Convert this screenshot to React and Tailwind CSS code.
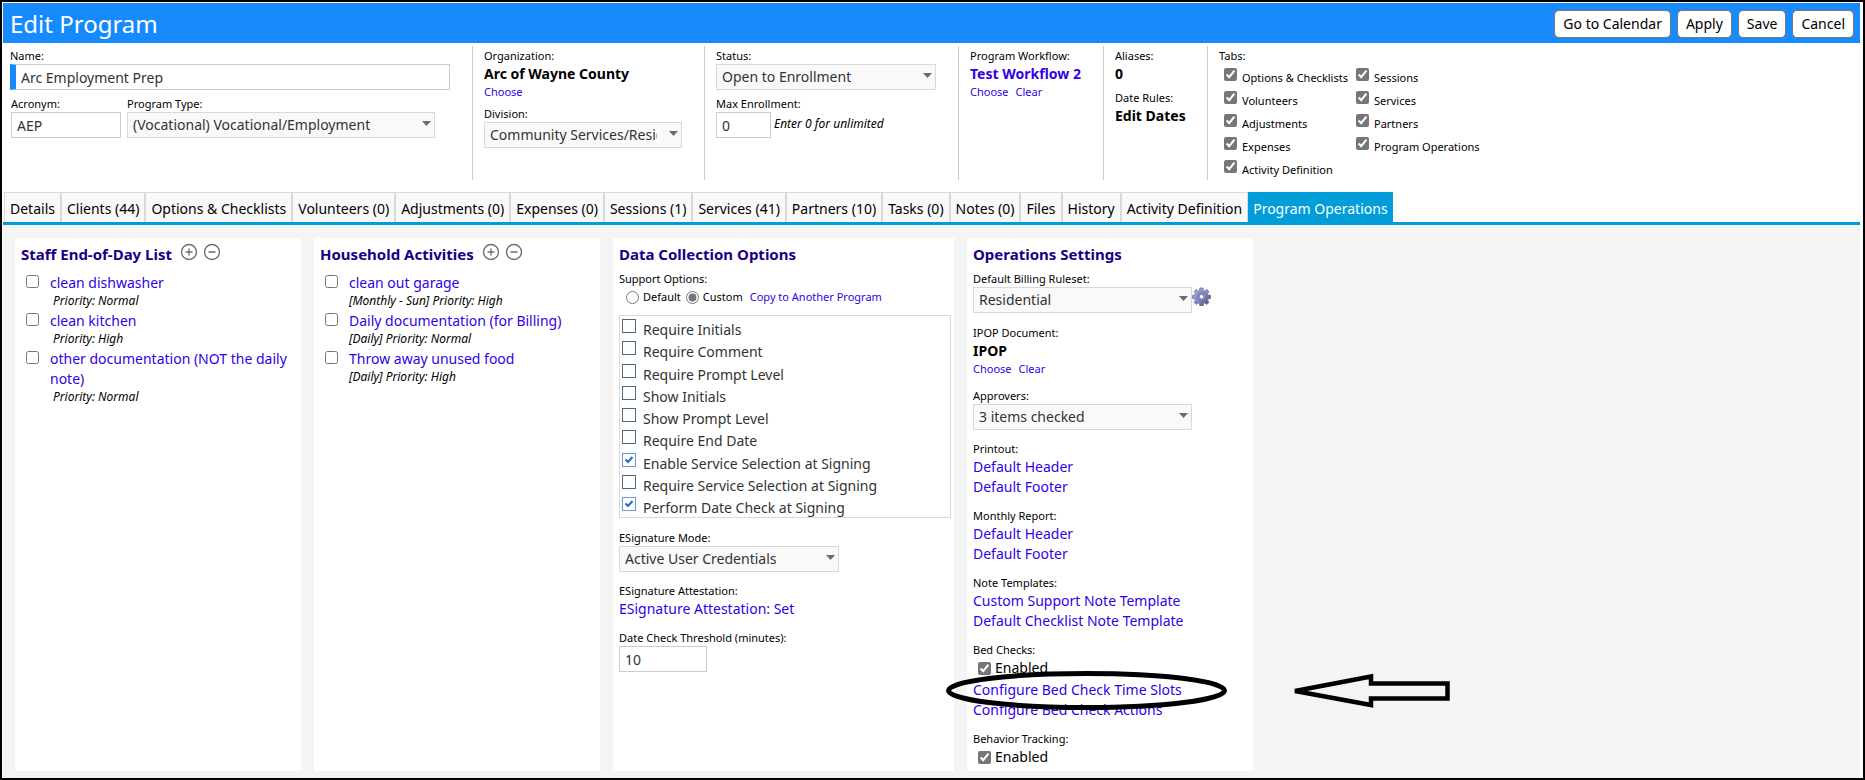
import React from 'react';
import { CirclePlus, CircleMinus } from 'lucide-react';

const tabs = [
  { name: 'Details' },
  { name: 'Clients (44)' },
  { name: 'Options & Checklists' },
  { name: 'Volunteers (0)' },
  { name: 'Adjustments (0)' },
  { name: 'Expenses (0)' },
  { name: 'Sessions (1)' },
  { name: 'Services (41)' },
  { name: 'Partners (10)' },
  { name: 'Tasks (0)' },
  { name: 'Notes (0)' },
  { name: 'Files' },
  { name: 'History' },
  { name: 'Activity Definition' },
  { name: 'Program Operations', active: true },
];

const tabOptions = [
  ['Options & Checklists', 'Volunteers', 'Adjustments', 'Expenses', 'Activity Definition'],
  ['Sessions', 'Services', 'Partners', 'Program Operations'],
];

const staffItems = [
  { title: 'clean dishwasher', note: 'Priority: Normal' },
  { title: 'clean kitchen', note: 'Priority: High' },
  { title: 'other documentation (NOT the daily note)', note: 'Priority: Normal' },
];

const householdItems = [
  { title: 'clean out garage', note: '[Monthly - Sun] Priority: High' },
  { title: 'Daily documentation (for Billing)', note: '[Daily] Priority: Normal' },
  { title: 'Throw away unused food', note: '[Daily] Priority: High' },
];

const supportOptions = [
  { name: 'Require Initials' },
  { name: 'Require Comment' },
  { name: 'Require Prompt Level' },
  { name: 'Show Initials' },
  { name: 'Show Prompt Level' },
  { name: 'Require End Date' },
  { name: 'Enable Service Selection at Signing', checked: true },
  { name: 'Require Service Selection at Signing' },
  { name: 'Perform Date Check at Signing', checked: true },
];

const Caption = ({ htmlFor, children }) =>
  htmlFor ? (
    <label htmlFor={htmlFor} className="block text-[11px] leading-4">{children}</label>
  ) : (
    <div className="text-[11px] leading-4">{children}</div>
  );

const Link = ({ small, children }) => (
  <a href="#" className={small ? 'text-[11px] leading-4 text-[#3300e6]' : 'text-sm leading-5 text-[#3300e6]'}>
    {children}
  </a>
);

const Select = ({ id, value, className }) => (
  <div className={`relative ${className}`}>
    <select
      id={id}
      className="block h-[26px] w-full appearance-none overflow-hidden border border-[#d9d9d9] bg-[#f9f9f9] pl-[5px] pr-6 text-sm text-[#333]"
    >
      <option>{value}</option>
    </select>
    <svg className="pointer-events-none absolute right-1 top-[9px]" width="9" height="5" viewBox="0 0 9 5">
      <path d="M0 0h9L4.500 5z" fill="#6b6b6b" />
    </svg>
  </div>
);

const TextInput = ({ id, value, className }) => (
  <input
    id={id}
    type="text"
    defaultValue={value}
    className={`block h-[26px] border border-[#ccc] bg-white px-[5px] text-sm text-[#333] ${className}`}
  />
);

const Check = ({ id, className = '' }) => (
  <input id={id} type="checkbox" defaultChecked className={`size-[13px] shrink-0 accent-[#767676] ${className}`} />
);

const Panel = ({ title, actions, className, children }) => (
  <section className={`shrink-0 bg-white px-[6px] pt-1 ${className}`}>
    <div className="mb-[5px] flex h-6 items-center gap-2">
      <h2 className="text-[15px] font-bold text-[#1b0086]">{title}</h2>
      {actions && (
        <div className="flex gap-[5px] pb-1 text-[#6e6e6e]">
          <button type="button" aria-label="Add"><CirclePlus size={18} strokeWidth={1.8} /></button>
          <button type="button" aria-label="Remove"><CircleMinus size={18} strokeWidth={1.8} /></button>
        </div>
      )}
    </div>
    {children}
  </section>
);

const TaskList = ({ prefix, items, noteClass = '' }) => (
  <ul className="mt-[7px]">
    {items.map((item, i) => (
      <li key={item.title} className="flex gap-[11px] pl-[5px]">
        <input id={`${prefix}-${i}`} type="checkbox" aria-label={item.title} className="mt-[2px] size-[13px] shrink-0" />
        <div>
          <div className="text-sm leading-5"><Link>{item.title}</Link></div>
          <div className={`pb-[2px] text-xs leading-4 italic ${noteClass}`}>{item.note}</div>
        </div>
      </li>
    ))}
  </ul>
);

const Gear = () => (
  <svg width="19" height="19" viewBox="0 0 20 20">
    <defs>
      <linearGradient id="gear" x1="0" y1="0" x2="1" y2="1">
        <stop offset="0" stopColor="#b4b3e0" />
        <stop offset="0.5" stopColor="#8887c0" />
        <stop offset="1" stopColor="#4a4978" />
      </linearGradient>
    </defs>
    <g fill="url(#gear)" stroke="#5c5b8c" strokeWidth="0.6">
      <path d="M8.300 1h3.400l.5 2.600 1.200.5 2.200-1.500 2.300 2.300-1.500 2.200.5 1.200 2.600.5v3.400l-2.600.5-.5 1.200 1.500 2.200-2.300 2.300-2.200-1.500-1.200.5-.5 2.600H8.300l-.5-2.600-1.200-.5-2.200 1.500-2.300-2.300 1.500-2.200-.5-1.200L.5 12.200V8.800l2.600-.5.5-1.200-1.500-2.200 2.300-2.300 2.200 1.500 1.200-.5z" />
      <circle cx="10" cy="10.200" r="4.200" fill="#9b9acb" />
    </g>
    <circle cx="10" cy="10.200" r="2.400" fill="#fff" stroke="#5c5b8c" strokeWidth="0.8" />
  </svg>
);

const Header = () => (
  <header className="flex h-10 items-center justify-between bg-[#178bfd] pt-px pr-[6px] pl-[7px]">
    <h1 className="text-2xl text-white">Edit Program</h1>
    <div className="flex gap-[6px]">
      {['Go to Calendar', 'Apply', 'Save', 'Cancel'].map((name) => (
        <button
          key={name}
          type="button"
          className="h-7 rounded-[5px] border border-[#777] bg-white px-2 text-sm text-black"
        >
          {name}
        </button>
      ))}
    </div>
  </header>
);

const Summary = () => (
  <div className="flex h-[137px] items-stretch pt-[3px] pl-[7px]">
    <div className="w-[462px] shrink-0 pt-[2px]">
      <Caption htmlFor="name">Name:</Caption>
      <TextInput id="name" value="Arc Employment Prep" className="w-[440px] border-l-[6px] border-l-[#178bfd]" />
      <div className="mt-[6px] flex gap-[6px] pl-px">
        <div>
          <Caption htmlFor="acronym">Acronym:</Caption>
          <TextInput id="acronym" value="AEP" className="w-[110px]" />
        </div>
        <div>
          <Caption htmlFor="type">Program Type:</Caption>
          <Select id="type" value="(Vocational) Vocational/Employment" className="w-[308px]" />
        </div>
      </div>
    </div>

    <div className="w-[232px] shrink-0 border-l border-[#ccc] pl-[11px] pt-[2px]">
      <Caption>Organization:</Caption>
      <div className="text-sm leading-5 font-bold">Arc of Wayne County</div>
      <div className="flex"><Link small>Choose</Link></div>
      <div className="mt-[6px]">
        <Caption htmlFor="division">Division:</Caption>
        <Select id="division" value="Community Services/Residential" className="w-[198px]" />
      </div>
    </div>

    <div className="w-[254px] shrink-0 border-l border-[#ccc] pl-[11px] pt-[2px]">
      <Caption htmlFor="status">Status:</Caption>
      <Select id="status" value="Open to Enrollment" className="w-[220px]" />
      <div className="mt-[6px]">
        <Caption htmlFor="max">Max Enrollment:</Caption>
        <div className="flex gap-[3px]">
          <TextInput id="max" value="0" className="w-[55px]" />
          <span className="text-xs leading-6 italic">Enter 0 for unlimited</span>
        </div>
      </div>
    </div>

    <div className="w-[145px] shrink-0 border-l border-[#ccc] pl-[11px] pt-[2px]">
      <Caption>Program Workflow:</Caption>
      <a href="#" className="block text-sm leading-5 font-bold text-[#3300e6]">Test Workflow 2</a>
      <div className="flex gap-[7px]"><Link small>Choose</Link><Link small>Clear</Link></div>
    </div>

    <div className="w-[104px] shrink-0 border-l border-[#ccc] pl-[11px] pt-[2px]">
      <Caption>Aliases:</Caption>
      <div className="text-sm leading-5 font-bold">0</div>
      <div className="mt-[6px]">
        <Caption>Date Rules:</Caption>
        <div className="text-sm leading-5 font-bold">Edit Dates</div>
      </div>
    </div>

    <div className="shrink-0 border-l border-[#ccc] pl-[11px] pt-[2px]">
      <Caption>Tabs:</Caption>
      <div className="flex pl-[5px]">
        {tabOptions.map((column, c) => (
          <div key={c} className="w-[132px]">
            {column.map((name, i) => (
              <div key={name} className="flex h-[23px] gap-[5px] whitespace-nowrap">
                <Check id={`tab-${c}-${i}`} className="mt-1" />
                <label htmlFor={`tab-${c}-${i}`} className="pt-[6px] text-[11px] leading-4">{name}</label>
              </div>
            ))}
          </div>
        ))}
      </div>
    </div>
  </div>
);

const Tabs = () => (
  <nav className="mt-3 flex h-[33px] border-b-[3px] border-[#009dd9] pl-px">
    {tabs.map((tab) => (
      <a
        key={tab.name}
        href="#"
        className={
          tab.active
            ? 'bg-[#009dd9] px-[5px] text-sm leading-[33px] whitespace-nowrap text-white'
            : 'border border-b-0 border-[#d9d9d9] bg-[#f9f9f9] px-[5px] text-sm leading-8 whitespace-nowrap text-black'
        }
      >
        {tab.name}
      </a>
    ))}
  </nav>
);

const DataCollection = () => (
  <Panel title="Data Collection Options" className="w-[341px] pr-[3px]">
    <Caption>Support Options:</Caption>
    <div className="flex h-5 items-center pl-[7px] text-[11px]">
      <input id="opt-default" type="radio" name="support" className="mr-1 size-[13px]" />
      <label htmlFor="opt-default">Default</label>
      <input id="opt-custom" type="radio" name="support" defaultChecked className="mr-1 ml-[5px] size-[13px] accent-[#767676]" />
      <label htmlFor="opt-custom" className="mr-[7px]">Custom</label>
      <Link small>Copy to Another Program</Link>
    </div>
    <div className="mt-2 flex h-[203px] flex-col justify-between border border-[#d9d9d9] pl-[2px] pt-[3px]">
      {supportOptions.map((option, i) => (
        <div key={option.name} className="flex h-5 gap-[7px]">
          <span className="relative size-[14px] shrink-0">
            <input
              id={`support-${i}`}
              type="checkbox"
              defaultChecked={option.checked}
              className="peer block size-[14px] appearance-none border border-[#4d6a80] bg-white checked:border-[#6f96d6]"
            />
            <svg className="pointer-events-none absolute top-0 left-0 hidden peer-checked:block" width="14" height="14" viewBox="0 0 14 14">
              <path d="M3.500 6.500l2.500 2.500 4.500-5" fill="none" stroke="#1f6fd6" strokeWidth="2.200" />
            </svg>
          </span>
          <label htmlFor={`support-${i}`} className="text-sm leading-[22px] text-[#333]">{option.name}</label>
        </div>
      ))}
    </div>
    <div className="mt-3 flex flex-col gap-[11px]">
      <div>
        <Caption htmlFor="esig">ESignature Mode:</Caption>
        <Select id="esig" value="Active User Credentials" className="w-[220px]" />
      </div>
      <div>
        <Caption>ESignature Attestation:</Caption>
        <div className="flex"><Link>ESignature Attestation: Set</Link></div>
      </div>
      <div>
        <Caption htmlFor="threshold">Date Check Threshold (minutes):</Caption>
        <TextInput id="threshold" value="10" className="w-[88px]" />
      </div>
    </div>
  </Panel>
);

const LinkGroup = ({ title, links }) => (
  <div>
    <Caption>{title}</Caption>
    <div className="flex flex-col items-start">
      {links.map((name) => <Link key={name}>{name}</Link>)}
    </div>
  </div>
);

// Hand drawn ellipse and arrow over the time slots link
const Markup = () => (
  <svg className="pointer-events-none absolute -top-[10px] -left-7 z-10" width="508" height="42" viewBox="0 0 508 42" fill="none" stroke="#000">
    <ellipse cx="141.500" cy="20.500" rx="138" ry="17" strokeWidth="5" />
    <path d="M350 21L426 6.500v7h76.500v15H426V35z" strokeWidth="4.500" strokeLinejoin="miter" strokeMiterlimit="3" />
  </svg>
);

const Operations = () => (
  <Panel title="Operations Settings" className="w-[286px] pb-[2px]">
    <div className="flex flex-col gap-[11px]">
      <div>
        <Caption htmlFor="ruleset">Default Billing Ruleset:</Caption>
        <div className="flex h-[27px] items-start">
          <Select id="ruleset" value="Residential" className="w-[219px]" />
          <button type="button" aria-label="Ruleset settings"><Gear /></button>
        </div>
      </div>
      <div>
        <Caption>IPOP Document:</Caption>
        <div className="text-sm leading-5 font-bold">IPOP</div>
        <div className="flex gap-[7px]"><Link small>Choose</Link><Link small>Clear</Link></div>
      </div>
      <div>
        <Caption htmlFor="approvers">Approvers:</Caption>
        <Select id="approvers" value="3 items checked" className="w-[219px]" />
      </div>
      <LinkGroup title="Printout:" links={['Default Header', 'Default Footer']} />
      <LinkGroup title="Monthly Report:" links={['Default Header', 'Default Footer']} />
      <LinkGroup title="Note Templates:" links={['Custom Support Note Template', 'Default Checklist Note Template']} />
      <div>
        <Caption>Bed Checks:</Caption>
        <div className="flex h-[22px] gap-1 pl-[5px]">
          <Check id="bed" className="mt-1" />
          <label htmlFor="bed" className="text-sm leading-5">Enabled</label>
        </div>
        <div className="relative flex flex-col items-start">
          <Link>Configure Bed Check Time Slots</Link>
          <Link>Configure Bed Check Actions</Link>
          <Markup />
        </div>
      </div>
      <div>
        <Caption>Behavior Tracking:</Caption>
        <div className="flex h-[22px] gap-1 pl-[5px]">
          <Check id="behavior" className="mt-1" />
          <label htmlFor="behavior" className="text-sm leading-5">Enabled</label>
        </div>
      </div>
    </div>
  </Panel>
);

const App = () => (
  <div className="flex min-h-screen flex-col border-2 border-black bg-white pt-px pr-[3px] pl-px font-['Noto_Sans','Open_Sans',sans-serif] text-black">
    <Header />
    <Summary />
    <Tabs />
    <main className="flex flex-1 gap-[13px] bg-[#f4f4f4] pt-[13px] pb-[7px] pl-3">
      <Panel title="Staff End-of-Day List" actions className="w-[286px]">
        <TaskList prefix="staff" items={staffItems} noteClass="pl-[3px]" />
      </Panel>
      <Panel title="Household Activities" actions className="w-[286px]">
        <TaskList prefix="house" items={householdItems} />
      </Panel>
      <DataCollection />
      <Operations />
    </main>
  </div>
);

export default App;
